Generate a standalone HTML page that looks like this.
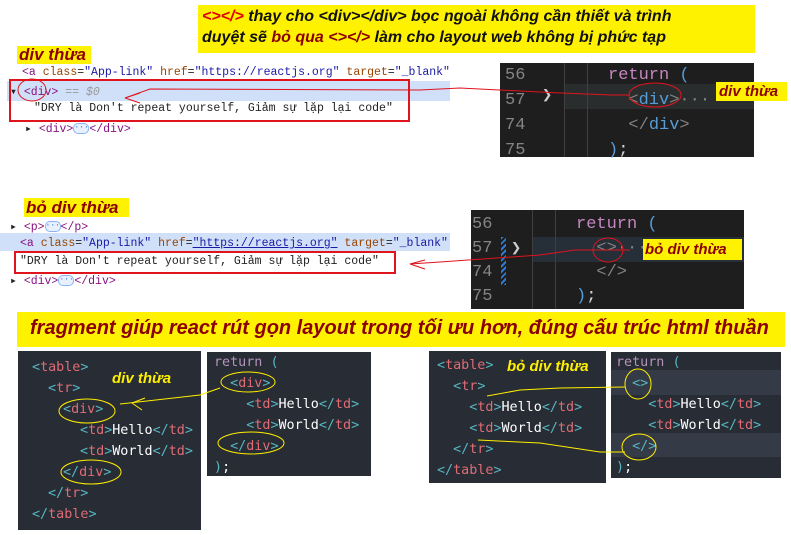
<!DOCTYPE html>
<html><head><meta charset="utf-8"><style>
body{margin:0;width:791px;height:535px;background:#fff;position:relative;overflow:hidden;font-family:"Liberation Sans","DejaVu Sans",sans-serif}
.a{position:absolute;white-space:nowrap}
.y{background:#fff200}
.lb{font-weight:bold;font-style:italic;color:#8b0000}
.m{font-family:"Liberation Mono","DejaVu Sans Mono",monospace;font-size:11.5px;color:#222}
.tg{color:#881280}.at{color:#994500}.av{color:#1a1aa6}
.cp{position:absolute;background:#1e1e1e;font-family:"Liberation Mono",monospace;font-size:17px;color:#d4d4d4}
.ln{color:#858585}
.gr{color:#808080}.bl{color:#569cd6}.kw{color:#c586c0}
.dp{position:absolute;background:#282c34;font-family:"DejaVu Sans Mono","Liberation Mono",monospace;font-size:13.4px;color:#fff}
.b{color:#56b6c2}.r{color:#e06c75}.p{color:#b294bb}
.dots{display:inline-block;width:14px;height:9px;border:1px solid #8ab4f8;border-radius:5px;background:#e8f0fe;font-size:8px;line-height:8px;text-align:center;color:#1a73e8;vertical-align:middle}
.l{height:21px;line-height:21px}
</style></head><body>

<div class="a y" style="left:198px;top:5px;width:557px;height:48px"></div>
<div class="a" style="left:202px;top:6px;font-size:16px;font-weight:bold;font-style:italic;line-height:21px;color:#111">
<span style="color:#e00000">&lt;&gt;&lt;/&gt;</span> thay cho &lt;div&gt;&lt;/div&gt; bọc ngoài không cần thiết và trình<br>duyệt sẽ <span style="color:#8b0000">bỏ qua</span> <span style="color:#8b0000">&lt;&gt;&lt;/&gt;</span> làm cho layout web không bị phức tạp</div>

<div class="a y lb" style="left:17px;top:46px;width:72px;height:18px;font-size:17px;line-height:18px;padding-left:2px">div thừa</div>

<div class="a m" style="left:22px;top:66px"><span class="tg">&lt;a</span> <span class="at">class</span>=<span class="av">"App-link"</span> <span class="at">href</span>=<span class="av">"https://reactjs.org"</span> <span class="at">target</span>=<span class="av">"_blank"</span></div>
<div class="a" style="left:7px;top:81px;width:443px;height:20px;background:#cfe0f8"></div>
<div class="a m" style="left:10px;top:84px">▾ <span class="tg">&lt;div&gt;</span> <span style="color:#999;font-style:italic">== $0</span></div>
<div class="a m" style="left:34px;top:102px">"DRY là Don't repeat yourself, Giảm sự lặp lại code"</div>
<div class="a" style="left:9px;top:79px;width:397px;height:39px;border:2px solid #e0141c"></div>
<div class="a m" style="left:25px;top:121px">▸ <span class="tg">&lt;div&gt;</span><span class="dots">···</span><span class="tg">&lt;/div&gt;</span></div>

<div class="cp" style="left:500px;top:63px;width:254px;height:94px">
<div class="a" style="left:65px;top:21px;width:189px;height:25px;background:#2a2d2e"></div>
<div class="a" style="left:64px;top:0;width:1px;height:94px;background:#404040"></div>
<div class="a" style="left:87px;top:0;width:1px;height:94px;background:#404040"></div>
<div class="a ln" style="left:5px;top:0px;line-height:25px">56<br>57<br>74<br>75</div>
<div class="a" style="left:42px;top:21px;line-height:25px;color:#ccc">❯</div>
<div class="a" style="left:108px;top:0;line-height:25px"><span class="kw">return</span> <span class="bl">(</span><br>&nbsp;&nbsp;<span class="gr">&lt;</span><span class="bl">div</span><span class="gr">&gt;</span><span class="gr">···</span><br>&nbsp;&nbsp;<span class="gr">&lt;/</span><span class="bl">div</span><span class="gr">&gt;</span><br><span class="bl">)</span>;</div>
</div>
<div class="a y lb" style="left:716px;top:82px;width:68px;height:19px;font-size:15px;line-height:19px;padding-left:3px">div thừa</div>

<div class="a y lb" style="left:24px;top:198px;width:103px;height:19px;font-size:17px;line-height:19px;padding-left:2px">bỏ div thừa</div>
<div class="a m" style="left:10px;top:219px">▸ <span class="tg">&lt;p&gt;</span><span class="dots">···</span><span class="tg">&lt;/p&gt;</span></div>
<div class="a" style="left:0;top:233px;width:450px;height:18px;background:#cfe0f8"></div>
<div class="a m" style="left:20px;top:237px"><span class="tg">&lt;a</span> <span class="at">class</span>=<span class="av">"App-link"</span> <span class="at">href</span>=<span class="av" style="text-decoration:underline;color:#1a1aa6">"https://reactjs.org"</span> <span class="at">target</span>=<span class="av">"_blank"</span></div>
<div class="a m" style="left:20px;top:255px">"DRY là Don't repeat yourself, Giảm sự lặp lại code"</div>
<div class="a" style="left:14px;top:251px;width:378px;height:19px;border:2px solid #e0141c"></div>
<div class="a m" style="left:10px;top:273px">▸ <span class="tg">&lt;div&gt;</span><span class="dots">···</span><span class="tg">&lt;/div&gt;</span></div>

<div class="cp" style="left:471px;top:210px;width:273px;height:99px">
<div class="a" style="left:62px;top:27px;width:211px;height:25px;background:#262e38"></div>
<div class="a" style="left:61px;top:0;width:1px;height:99px;background:#404040"></div>
<div class="a" style="left:84px;top:0;width:1px;height:99px;background:#404040"></div>
<div class="a" style="left:30px;top:27px;width:5px;height:48px;background:repeating-linear-gradient(135deg,#2e7bd6 0 2px,#1e1e1e 2px 4px)"></div>
<div class="a ln" style="left:1px;top:3px;line-height:24px">56<br>57<br>74<br>75</div>
<div class="a" style="left:40px;top:27px;line-height:25px;color:#ccc">❯</div>
<div class="a" style="left:105px;top:3px;line-height:24px"><span class="kw">return</span> <span class="bl">(</span><br>&nbsp;&nbsp;<span class="gr">&lt;&gt;</span><span class="gr">···</span><br>&nbsp;&nbsp;<span class="gr">&lt;/&gt;</span><br><span class="bl">)</span>;</div>
</div>
<div class="a y lb" style="left:643px;top:239px;width:97px;height:21px;font-size:15px;line-height:21px;padding-left:2px">bỏ div thừa</div>

<div class="a y lb" style="left:17px;top:312px;width:768px;height:35px;font-size:20px;line-height:33px;padding-left:13px;box-sizing:border-box">fragment giúp react rút gọn layout trong tối ưu hơn, đúng cấu trúc html thuần</div>

<div class="dp" style="left:18px;top:351px;width:183px;height:179px">
<div class="a" style="left:14px;top:6px">
<div class="l"><span class="b">&lt;</span><span class="r">table</span><span class="b">&gt;</span></div>
<div class="l" style="margin-left:16px"><span class="b">&lt;</span><span class="r">tr</span><span class="b">&gt;</span></div>
<div class="l" style="margin-left:31px"><span class="b">&lt;</span><span class="r">div</span><span class="b">&gt;</span></div>
<div class="l" style="margin-left:48px"><span class="b">&lt;</span><span class="r">td</span><span class="b">&gt;</span>Hello<span class="b">&lt;/</span><span class="r">td</span><span class="b">&gt;</span></div>
<div class="l" style="margin-left:48px"><span class="b">&lt;</span><span class="r">td</span><span class="b">&gt;</span>World<span class="b">&lt;/</span><span class="r">td</span><span class="b">&gt;</span></div>
<div class="l" style="margin-left:31px"><span class="b">&lt;/</span><span class="r">div</span><span class="b">&gt;</span></div>
<div class="l" style="margin-left:16px"><span class="b">&lt;/</span><span class="r">tr</span><span class="b">&gt;</span></div>
<div class="l"><span class="b">&lt;/</span><span class="r">table</span><span class="b">&gt;</span></div>
</div>
<div class="a" style="left:94px;top:19px;font-size:15px;font-weight:bold;font-style:italic;color:#ffef00;font-family:'Liberation Sans',sans-serif">div thừa</div>
</div>
<div class="dp" style="left:207px;top:352px;width:164px;height:124px">
<div class="a" style="left:7px;top:0px;line-height:21px"><span class="p">return</span> <span class="b">(</span><br>&nbsp;&nbsp;<span class="b">&lt;</span><span class="r">div</span><span class="b">&gt;</span><br>&nbsp;&nbsp;&nbsp;&nbsp;<span class="b">&lt;</span><span class="r">td</span><span class="b">&gt;</span>Hello<span class="b">&lt;/</span><span class="r">td</span><span class="b">&gt;</span><br>&nbsp;&nbsp;&nbsp;&nbsp;<span class="b">&lt;</span><span class="r">td</span><span class="b">&gt;</span>World<span class="b">&lt;/</span><span class="r">td</span><span class="b">&gt;</span><br>&nbsp;&nbsp;<span class="b">&lt;/</span><span class="r">div</span><span class="b">&gt;</span><br><span class="b">)</span>;</div>
</div>

<div class="dp" style="left:429px;top:351px;width:177px;height:132px">
<div class="a" style="left:8px;top:4px;line-height:21px"><span class="b">&lt;</span><span class="r">table</span><span class="b">&gt;</span><br>&nbsp;&nbsp;<span class="b">&lt;</span><span class="r">tr</span><span class="b">&gt;</span><br>&nbsp;&nbsp;&nbsp;&nbsp;<span class="b">&lt;</span><span class="r">td</span><span class="b">&gt;</span>Hello<span class="b">&lt;/</span><span class="r">td</span><span class="b">&gt;</span><br>&nbsp;&nbsp;&nbsp;&nbsp;<span class="b">&lt;</span><span class="r">td</span><span class="b">&gt;</span>World<span class="b">&lt;/</span><span class="r">td</span><span class="b">&gt;</span><br>&nbsp;&nbsp;<span class="b">&lt;/</span><span class="r">tr</span><span class="b">&gt;</span><br><span class="b">&lt;/</span><span class="r">table</span><span class="b">&gt;</span></div>
<div class="a" style="left:78px;top:7px;font-size:15px;font-weight:bold;font-style:italic;color:#ffef00;font-family:'Liberation Sans',sans-serif">bỏ div thừa</div>
</div>
<div class="dp" style="left:611px;top:352px;width:170px;height:126px">
<div class="a" style="left:0;top:18px;width:170px;height:25px;background:#343a46"></div>
<div class="a" style="left:0;top:81px;width:170px;height:24px;background:#343a46"></div>
<div class="a" style="left:5px;top:0px;line-height:21px"><span class="p">return</span> <span class="b">(</span><br>&nbsp;&nbsp;<span class="b">&lt;&gt;</span><br>&nbsp;&nbsp;&nbsp;&nbsp;<span class="b">&lt;</span><span class="r">td</span><span class="b">&gt;</span>Hello<span class="b">&lt;/</span><span class="r">td</span><span class="b">&gt;</span><br>&nbsp;&nbsp;&nbsp;&nbsp;<span class="b">&lt;</span><span class="r">td</span><span class="b">&gt;</span>World<span class="b">&lt;/</span><span class="r">td</span><span class="b">&gt;</span><br>&nbsp;&nbsp;<span class="b">&lt;/&gt;</span><br><span class="b">)</span>;</div>
</div>

<svg class="a" style="left:0;top:0" width="791" height="535" fill="none">
<g stroke="#e0141c" stroke-width="1">
<ellipse cx="32" cy="90" rx="14" ry="11"/>
<path d="M125 98 L150 89 L420 90 L460 88 L560 93 L612 95 L630 95"/>
<path d="M125 98 L140 93 M125 98 L140 103"/>
<ellipse cx="655" cy="95" rx="26" ry="12"/>
<path d="M410 264 L440 262 L540 255 L575 250 L630 250"/>
<path d="M410 264 L425 260 M410 264 L425 269"/>
<ellipse cx="608" cy="250" rx="15" ry="12"/>
</g>
<g stroke="#ffef00" stroke-width="1">
<ellipse cx="87" cy="411" rx="28" ry="12"/>
<ellipse cx="91" cy="472" rx="30" ry="12"/>
<ellipse cx="248" cy="382" rx="27" ry="10"/>
<ellipse cx="251" cy="443" rx="33" ry="11"/>
<path d="M120 404 L200 395 L220 388"/>
<path d="M132 403 L145 398 M132 403 L142 410"/>
<ellipse cx="638" cy="384" rx="13" ry="15"/>
<ellipse cx="639" cy="447" rx="17" ry="13"/>
<path d="M487 396 L520 390 L560 388 L625 387"/>
<path d="M478 440 L540 443 L600 452 L625 452"/>
</g>
</svg>
</body></html>
